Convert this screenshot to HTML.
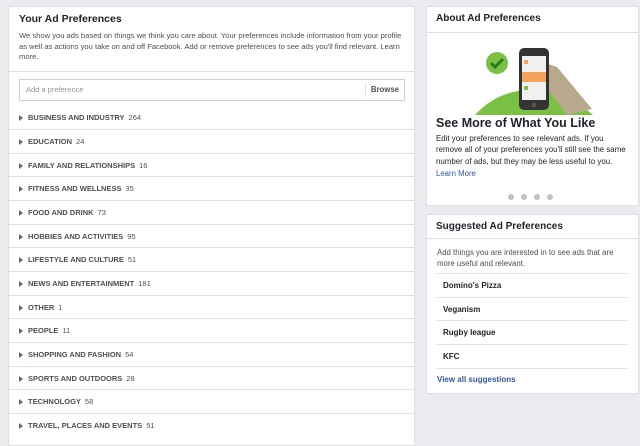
<!DOCTYPE html>
<html><head><style>
*{margin:0;padding:0;box-sizing:border-box}
body{width:640px;height:437px;background:#e9ebee;font-family:"Liberation Sans",sans-serif;position:relative;overflow:hidden;color:#1d2129}
.p{position:absolute;background:#fff;border:1px solid #dddfe2;border-radius:2px}
.h{font-weight:bold;font-size:10.5px;position:absolute}
.row{position:absolute;left:0;width:405px;height:24px;border-top:1px solid #dddfe2;font-size:7.5px;font-weight:bold;color:#4b4f56;padding-left:19px;line-height:23px}
.row span{font-weight:normal;color:#4b4f56;margin-left:4px}
.row:before{content:"";position:absolute;left:10px;top:9px;border-left:4px solid #606770;border-top:3px solid transparent;border-bottom:3px solid transparent}
.s{position:absolute;left:10px;width:190px;border-top:1px solid #dddfe2;height:24px;font-size:8px;font-weight:bold;padding-left:6px;line-height:23px}
</style></head><body>
<div class="p" style="left:8px;top:6px;width:407px;height:440px">
<div class="h" style="left:10px;top:6px">Your Ad Preferences</div>
<div style="position:absolute;left:10px;top:24px;width:385px;font-size:7.6px;line-height:10.5px;color:#4b4f56">We show you ads based on things we think you care about. Your preferences include information from your profile as well as actions you take on and off Facebook. Add or remove preferences to see ads you'll find relevant. Learn more.</div>
<div style="position:absolute;left:0;top:64px;width:405px;border-top:1px solid #dddfe2"></div>
<div style="position:absolute;left:10px;top:72px;width:386px;height:22px;border:1px solid #ccd0d5;font-size:7.5px;color:#90949c;line-height:20px;padding-left:6px">Add a preference<span style="position:absolute;right:0;top:3px;height:14px;line-height:14px;border-left:1px solid #dddfe2;padding:0 5px;color:#4b4f56;font-weight:bold;font-size:7.8px">Browse</span></div>
<div class="row" style="top:99px;border-top:none">BUSINESS AND INDUSTRY<span>264</span></div>
<div class="row" style="top:122px">EDUCATION<span>24</span></div>
<div class="row" style="top:146px">FAMILY AND RELATIONSHIPS<span>16</span></div>
<div class="row" style="top:169px">FITNESS AND WELLNESS<span>35</span></div>
<div class="row" style="top:193px">FOOD AND DRINK<span>73</span></div>
<div class="row" style="top:217px">HOBBIES AND ACTIVITIES<span>95</span></div>
<div class="row" style="top:240px">LIFESTYLE AND CULTURE<span>51</span></div>
<div class="row" style="top:264px">NEWS AND ENTERTAINMENT<span>181</span></div>
<div class="row" style="top:288px">OTHER<span>1</span></div>
<div class="row" style="top:311px">PEOPLE<span>11</span></div>
<div class="row" style="top:335px">SHOPPING AND FASHION<span>54</span></div>
<div class="row" style="top:359px">SPORTS AND OUTDOORS<span>28</span></div>
<div class="row" style="top:382px">TECHNOLOGY<span>58</span></div>
<div class="row" style="top:406px">TRAVEL, PLACES AND EVENTS<span>51</span></div>
</div>
<div class="p" style="left:426px;top:6px;width:213px;height:200px">
<div class="h" style="left:9px;top:6px;font-size:10px">About Ad Preferences</div>
<div style="position:absolute;left:0;top:25px;width:211px;border-top:1px solid #dddfe2"></div>
<svg style="position:absolute;left:40px;top:32px" width="130" height="78" viewBox="0 0 130 78">
<path d="M8 76 Q40 40 100 55 L126 76Z" fill="#7ac143"/>
<path d="M55 25 Q70 20 90 28 L125 70 L100 76 L80 50Z" fill="#b8a98c"/>
<circle cx="30" cy="24" r="11" fill="#7ac143"/>
<path d="M24 24 l4 4 l8 -8" stroke="#2b7a1b" stroke-width="3" fill="none"/>
<rect x="52" y="9" width="30" height="62" rx="5" fill="#333"/>
<rect x="55" y="17" width="24" height="44" fill="#f0f0f0"/>
<rect x="55" y="33" width="24" height="10" fill="#f5a25d"/>
<rect x="57" y="47" width="4" height="4" fill="#7ac143"/>
<rect x="57" y="21" width="4" height="4" fill="#f5a25d"/>
<circle cx="67" cy="66" r="2.5" fill="#555"/>
</svg>
<div style="position:absolute;left:9px;top:109px;font-weight:bold;font-size:12.5px">See More of What You Like</div>
<div style="position:absolute;left:9px;top:126px;width:192px;font-size:7.9px;line-height:11.3px;color:#1d2129">Edit your preferences to see relevant ads. If you remove all of your preferences you'll still see the same number of ads, but they may be less useful to you.</div>
<div style="position:absolute;left:9px;top:162px;font-size:7.8px;color:#365899">Learn More</div>
<div style="position:absolute;left:81px;top:187px;display:flex;gap:7px"><i style="width:6px;height:6px;border-radius:3px;background:#bec2c9"></i><i style="width:6px;height:6px;border-radius:3px;background:#bec2c9"></i><i style="width:6px;height:6px;border-radius:3px;background:#bec2c9"></i><i style="width:6px;height:6px;border-radius:3px;background:#bec2c9"></i></div>
</div>
<div class="p" style="left:426px;top:214px;width:213px;height:180px">
<div class="h" style="left:9px;top:6px;font-size:10px">Suggested Ad Preferences</div>
<div style="position:absolute;left:0;top:23px;width:211px;border-top:1px solid #dddfe2"></div>
<div style="position:absolute;left:10px;top:32px;width:195px;font-size:7.8px;line-height:11px;color:#4b4f56">Add things you are interested in to see ads that are more useful and relevant.</div>
<div class="s" style="top:58px">Domino's Pizza</div>
<div class="s" style="top:82px">Veganism</div>
<div class="s" style="top:105px">Rugby league</div>
<div class="s" style="top:129px">KFC</div>
<div style="position:absolute;left:10px;top:153px;width:190px;border-top:1px solid #dddfe2;padding-top:6px;font-size:8px;font-weight:bold;color:#365899">View all suggestions</div>
</div>
</body></html>
